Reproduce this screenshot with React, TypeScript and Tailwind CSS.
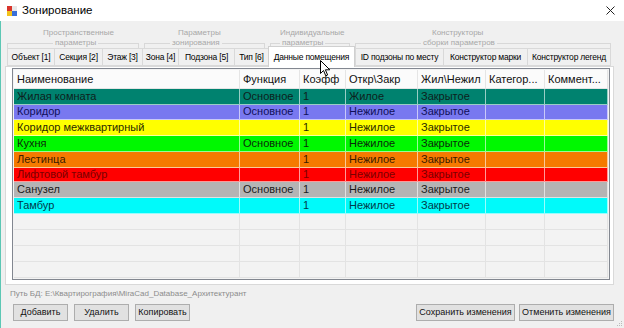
import React from 'react';

const font = { fontFamily: '"Liberation Sans", Arial, sans-serif' };

const groups = [
  { left: 'w-[46px]', l1: 'Пространственные', l2: 'параметры', x: 'w-[132px]', l1pad: 'pl-[36px]' },
  { left: 'w-[26px]', l1: 'Параметры', l2: 'зонирования', x: 'w-[121px]', l1pad: 'pl-[34px]' },
  { left: 'w-[10px]', l1: 'Индивидуальные', l2: 'параметры', x: 'w-[80px]', l1pad: 'pl-[10px]' },
  { left: 'w-[66px]', l1: 'Конструкторы', l2: 'сборки параметров', x: 'w-[256px]', l1pad: 'pl-[77px]' },
];

const tabs = [
  { t: 'Объект [1]', w: 'w-[47px]' },
  { t: 'Секция [2]', w: 'w-[48px]' },
  { t: 'Этаж [3]', w: 'w-[40px]' },
  { t: 'Зона [4]', w: 'w-[36px]' },
  { t: 'Подзона [5]', w: 'w-[56px]' },
  { t: 'Тип [6]', w: 'w-[34px]' },
  { t: 'Данные помещения', w: 'w-[87px]', active: true },
  { t: 'ID подзоны по месту', w: 'w-[88px]' },
  { t: 'Конструктор марки', w: 'w-[84px]' },
  { t: 'Конструктор легенд', w: 'w-[84px]' },
];

const cols = [
  { t: 'Наименование', w: 'w-[226px]' },
  { t: 'Функция', w: 'w-[60px]' },
  { t: 'Коэфф', w: 'w-[46px]' },
  { t: 'Откр\\Закр', w: 'w-[72px]' },
  { t: 'Жил\\Нежил', w: 'w-[68px]' },
  { t: 'Категор...', w: 'w-[59px]' },
  { t: 'Коммент...', w: 'w-[63px]' },
];

const rows = [
  { c: ['Жилая комната', 'Основное', '1', 'Жилое', 'Закрытое', '', ''], bg: 'bg-[#00826f]', fg: 'text-[#0d1f1c]', h: 'h-[16px]' },
  { c: ['Коридор', 'Основное', '1', 'Нежилое', 'Закрытое', '', ''], bg: 'bg-[#7878f0]', fg: 'text-[#10105a]', h: 'h-[15px]' },
  { c: ['Коридор межквартирный', '', '1', 'Нежилое', 'Закрытое', '', ''], bg: 'bg-[#ffff00]', fg: 'text-[#2a2a00]', h: 'h-[16px]' },
  { c: ['Кухня', 'Основное', '1', 'Нежилое', 'Закрытое', '', ''], bg: 'bg-[#00f800]', fg: 'text-[#0a2a0a]', h: 'h-[16px]' },
  { c: ['Лестинца', '', '1', 'Нежилое', 'Закрытое', '', ''], bg: 'bg-[#f57a00]', fg: 'text-[#3a1a00]', h: 'h-[16px]' },
  { c: ['Лифтовой тамбур', '', '1', 'Нежилое', 'Закрытое', '', ''], bg: 'bg-[#ff0000]', fg: 'text-[#7a0000]', h: 'h-[15px]' },
  { c: ['Санузел', 'Основное', '1', 'Нежилое', 'Закрытое', '', ''], bg: 'bg-[#b4b4b4]', fg: 'text-[#1a1a1a]', h: 'h-[16px]' },
  { c: ['Тамбур', '', '1', 'Нежилое', 'Закрытое', '', ''], bg: 'bg-[#00fafa]', fg: 'text-[#003a4a]', h: 'h-[16px]' },
];

function Btn({ children, w }: { children: React.ReactNode; w: string }) {
  return (
    <div className={`${w} h-[17px] flex items-center justify-center bg-[#e1e1e1] border border-[#adadad] text-[9px] text-[#111] whitespace-nowrap`}>
      {children}
    </div>
  );
}

export default function App() {
  return (
    <div style={font} className="relative w-[624px] h-[328px] bg-[#f0f0f0] overflow-hidden flex flex-col">
      {/* title bar */}
      <div className="h-[21px] shrink-0 bg-white flex items-center pl-[7px] pr-[9px]">
        <svg width="10" height="10" viewBox="0 0 10 10">
          <rect x="0" y="0" width="5" height="5" fill="#d9342b" />
          <rect x="5" y="0" width="5" height="5" fill="#e8e8e8" />
          <rect x="0" y="5" width="5" height="5" fill="#f2c21b" />
          <rect x="5" y="5" width="5" height="5" fill="#3a6fd8" />
        </svg>
        <span className="ml-[5px] text-[11.5px] text-black">Зонирование</span>
        <svg className="ml-auto" width="9" height="9" viewBox="0 0 9 9">
          <path d="M0.5 0.5 L8.5 8.5 M8.5 0.5 L0.5 8.5" stroke="#222" strokeWidth="1" />
        </svg>
      </div>

      <div className="flex-1 flex flex-col border-l border-[#5cc7b4] pl-[4px] pr-[10px]">
        {/* group labels */}
        <div className="h-[27px] flex items-end pl-[2px] gap-[5px]">
          {groups.map((g) => (
            <div key={g.l1} className={`${g.x} flex flex-col text-[8px] leading-[10px] text-[#a8a8a8]`}>
              <div className={`${g.l1pad} whitespace-nowrap`}>{g.l1}</div>
              <div className="flex items-start h-[10px]">
                <div className={`${g.left} mt-[5px] h-[5px] border-t border-l border-[#d8d8d8]`} />
                <div className="px-[2px] whitespace-nowrap">{g.l2}</div>
                <div className="flex-1 mt-[5px] h-[5px] border-t border-r border-[#d8d8d8]" />
              </div>
            </div>
          ))}
        </div>

        {/* tabs */}
        <div className="h-[18px] flex items-end pl-[2px] relative z-10">
          {tabs.map((t) =>
            t.active ? (
              <div key={t.t} className={`${t.w} h-[21px] -mb-[1px] bg-white border border-b-0 border-[#d0d0d0] flex items-center justify-center text-[8.5px] tracking-[-0.2px] whitespace-nowrap`}>
                {t.t}
              </div>
            ) : (
              <div key={t.t} className={`${t.w} h-[18px] bg-[#f0f0f0] border border-r-0 last:border-r border-[#d9d9d9] flex items-center justify-center text-[8.5px] tracking-[-0.2px] whitespace-nowrap`}>
                {t.t}
              </div>
            )
          )}
        </div>

        {/* tab page */}
        <div className="h-[219px] bg-white border border-[#d9d9d9] pt-[1px] pl-[6px] pr-[3px] pb-[4px] flex">
          <div className="flex-1 border border-[#828790] p-[1px] bg-[#f3f3f3] flex flex-col text-[11px]">
            <div className="h-[19px] flex bg-[#fbfbfb] border-b border-[#e5e5e5]">
              {cols.map((c) => (
                <div key={c.t} className={`${c.w} shrink-0 border-r border-[#e5e5e5] pl-[3px] flex items-center whitespace-nowrap text-[#111]`}>
                  {c.t}
                </div>
              ))}
            </div>
            {rows.map((r, i) => (
              <div key={i} className={`${r.h} flex ${r.bg} ${r.fg} border-b border-[#ffffff]/60`}>
                {r.c.map((v, j) => (
                  <div key={j} className={`${cols[j].w} shrink-0 border-r border-[#ffffff]/60 pl-[3px] flex items-center whitespace-nowrap leading-none`}>
                    {v}
                  </div>
                ))}
              </div>
            ))}
            {[0, 1, 2, 3].map((i) => (
              <div key={i} className="h-[16px] flex border-b border-[#e3e3e3]">
                {cols.map((c) => (
                  <div key={c.t} className={`${c.w} shrink-0 border-r border-[#e3e3e3]`} />
                ))}
              </div>
            ))}
          </div>
        </div>

        {/* path */}
        <div className="h-[18px] flex items-center pl-[5px] text-[8px] text-[#8c8c8c] whitespace-nowrap">
          Путь БД: E:\Квартирография\MiraCad_Database_Архитектурант
        </div>

        {/* buttons */}
        <div className="flex items-center pl-[8px] pt-[1px]">
          <Btn w="w-[55px]">Добавить</Btn>
          <div className="w-[6px]" />
          <Btn w="w-[55px]">Удалить</Btn>
          <div className="w-[6px]" />
          <Btn w="w-[55px]">Копировать</Btn>
          <div className="ml-auto" />
          <Btn w="w-[99px]">Сохранить изменения</Btn>
          <div className="w-[4px]" />
          <Btn w="w-[95px]">Отменить изменения</Btn>
        </div>
      </div>

      {/* resize grip */}
      <svg className="absolute right-[1px] bottom-[1px]" width="8" height="8" viewBox="0 0 8 8">
        <rect x="6" y="2" width="1" height="1" fill="#bbb" />
        <rect x="4" y="4" width="1" height="1" fill="#bbb" />
        <rect x="6" y="4" width="1" height="1" fill="#bbb" />
        <rect x="2" y="6" width="1" height="1" fill="#bbb" />
        <rect x="4" y="6" width="1" height="1" fill="#bbb" />
        <rect x="6" y="6" width="1" height="1" fill="#bbb" />
      </svg>

      {/* mouse cursor */}
      <svg className="absolute left-[320px] top-[60px] z-20" width="11" height="17" viewBox="0 0 11 17">
        <path d="M0.5 0.5 L0.5 13.5 L3.5 10.5 L5.8 15.8 L7.6 15 L5.4 9.8 L9.8 9.8 Z" fill="#fff" stroke="#000" strokeWidth="1" strokeLinejoin="round" />
      </svg>
    </div>
  );
}
